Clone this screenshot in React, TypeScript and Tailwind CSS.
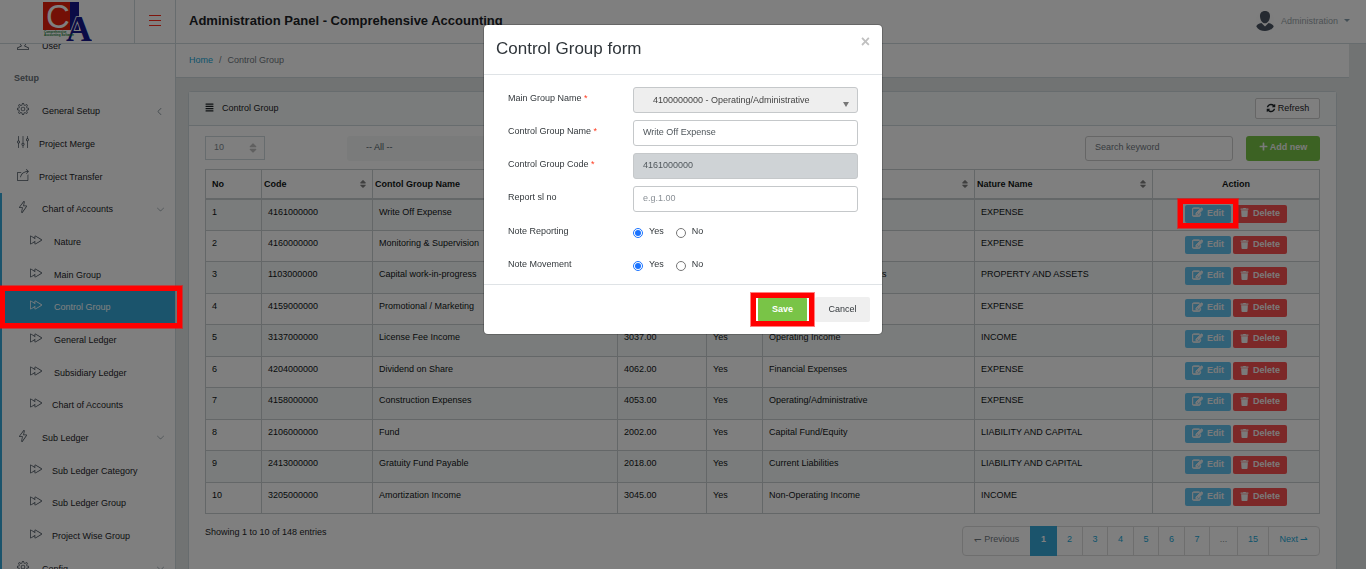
import React from "react";
import {
  SlUser,
  SlSettings,
  SlEqualizer,
  SlShareAlt,
  SlEnergy,
  SlControlForward,
  SlArrowDown,
  SlArrowLeft,
} from "react-icons/sl";
import { FaAlignJustify, FaPlus, FaSort, FaTrash } from "react-icons/fa";

type IconType = React.ComponentType<{ className?: string }>;

type NavItem = {
  label: string;
  icon?: IconType;
  level: "heading" | "top" | "tight" | "sub" | "subTight";
  chevron?: "left" | "down";
  grouped?: boolean;
  active?: boolean;
};

const navItems: NavItem[] = [
  { label: "User", icon: SlUser, level: "top" },
  { label: "Setup", level: "heading" },
  { label: "General Setup", icon: SlSettings, level: "top", chevron: "left" },
  { label: "Project Merge", icon: SlEqualizer, level: "tight" },
  { label: "Project Transfer", icon: SlShareAlt, level: "tight" },
  { label: "Chart of Accounts", icon: SlEnergy, level: "top", chevron: "down", grouped: true },
  { label: "Nature", icon: SlControlForward, level: "sub", grouped: true },
  { label: "Main Group", icon: SlControlForward, level: "sub", grouped: true },
  { label: "Control Group", icon: SlControlForward, level: "sub", grouped: true, active: true },
  { label: "General Ledger", icon: SlControlForward, level: "sub", grouped: true },
  { label: "Subsidiary Ledger", icon: SlControlForward, level: "sub", grouped: true },
  { label: "Chart of Accounts", icon: SlControlForward, level: "subTight", grouped: true },
  { label: "Sub Ledger", icon: SlEnergy, level: "top", chevron: "down", grouped: true },
  { label: "Sub Ledger Category", icon: SlControlForward, level: "subTight", grouped: true },
  { label: "Sub Ledger Group", icon: SlControlForward, level: "subTight", grouped: true },
  { label: "Project Wise Group", icon: SlControlForward, level: "subTight", grouped: true },
  { label: "Config", icon: SlSettings, level: "top", chevron: "down", grouped: true },
];

const levelClass = {
  heading: "pl-3",
  top: "pl-[15px] gap-[13px]",
  tight: "pl-[15px] gap-2.5",
  sub: "pl-7 gap-3",
  subTight: "pl-7 gap-2.5",
};

type Row = [string, string, string, string, string, string];

const rows: Row[] = [
  ["4161000000", "Write Off Expense", "4056.00", "Yes", "Operating/Administrative", "EXPENSE"],
  ["4160000000", "Monitoring & Supervision", "4055.00", "Yes", "Operating/Administrative", "EXPENSE"],
  ["1103000000", "Capital work-in-progress", "1003.00", "Yes", "Property, Plant & Equipments", "PROPERTY AND ASSETS"],
  ["4159000000", "Promotional / Marketing", "4054.00", "Yes", "Operating/Administrative", "EXPENSE"],
  ["3137000000", "License Fee Income", "3037.00", "Yes", "Operating Income", "INCOME"],
  ["4204000000", "Dividend on Share", "4062.00", "Yes", "Financial Expenses", "EXPENSE"],
  ["4158000000", "Construction Expenses", "4053.00", "Yes", "Operating/Administrative", "EXPENSE"],
  ["2106000000", "Fund", "2002.00", "Yes", "Capital Fund/Equity", "LIABILITY AND CAPITAL"],
  ["2413000000", "Gratuity Fund Payable", "2018.00", "Yes", "Current Liabilities", "LIABILITY AND CAPITAL"],
  ["3205000000", "Amortization Income", "3045.00", "Yes", "Non-Operating Income", "INCOME"],
];

const columns = ["Code", "Contol Group Name", "Sl no", "Note", "Main Group Name", "Nature Name"];

function Logo() {
  return (
    <svg viewBox="0 0 50 43" className="h-[43px] w-[50px]" role="img" aria-label="Comprehensive Accounting Software">
      <rect x="1" y="2" width="27" height="28" fill="#e8200c" />
      <rect x="28" y="2" width="9" height="28" fill="#16168c" />
      <text x="4" y="28" fontSize="33" fill="#fff" className="font-['Liberation_Sans',Arial,sans-serif]">C</text>
      <text x="24" y="41" fontSize="36" fontWeight="bold" fill="#16168c" stroke="#fff" strokeWidth="1.600" paintOrder="stroke" className="font-['Liberation_Serif',serif]">A</text>
      <text x="2" y="33" fontSize="3" fontWeight="bold" fill="#17803a" className="font-['Liberation_Sans',Arial,sans-serif]">Comprehensive</text>
      <text x="2" y="36" fontSize="3" fontWeight="bold" fill="#17803a" className="font-['Liberation_Sans',Arial,sans-serif]">Accounting Software</text>
    </svg>
  );
}

function RefreshIcon() {
  return (
    <svg viewBox="0 0 1792 1792" className="size-[10px]" fill="currentColor" aria-hidden="true">
      <path d="M1639 1056q0 5-1 7-64 268-268 434.500t-478 166.500q-146 0-282.500-55t-243.500-157l-129 129q-19 19-45 19t-45-19-19-45v-448q0-26 19-45t45-19h448q26 0 45 19t19 45-19 45l-137 137q71 66 161 102t187 36q134 0 250-65t186-179q11-17 53-117 8-23 30-23h192q13 0 22.500 9.500t9.500 22.500zm25-800v448q0 26-19 45t-45 19h-448q-26 0-45-19t-19-45 19-45l138-138q-148-137-349-137-134 0-250 65t-186 179q-11 17-53 117-8 23-30 23h-199q-13 0-22.500-9.500t-9.500-22.500v-7q65-268 270-434.500t480-166.500q146 0 284 55.500t245 156.500l130-129q19-19 45-19t45 19 19 45z" />
    </svg>
  );
}

function EditIcon() {
  return (
    <svg viewBox="0 0 1792 1792" className="size-[11px]" fill="currentColor" stroke="currentColor" strokeWidth="130" aria-hidden="true">
      <path d="M888 1184l116-116-152-152-116 116v56h96v96h56zm440-720q-16-16-33 1l-350 350q-17 17-1 33t33-1l350-350q17-17 1-33zm80 594v190q0 119-84.500 203.500t-203.500 84.500h-832q-119 0-203.500-84.500t-84.500-203.500v-832q0-119 84.500-203.500t203.500-84.500h832q63 0 117 25 15 7 18 23 3 17-9 29l-49 49q-14 14-32 8-23-6-45-6h-832q-66 0-113 47t-47 113v832q0 66 47 113t113 47h832q66 0 113-47t47-113v-126q0-13 9-22l64-64q15-15 35-7t20 29zm-96-738l288 288-672 672h-288v-288zm444 132l-92 92-288-288 92-92q28-28 68-28t68 28l152 152q28 28 28 68t-28 68z" />
    </svg>
  );
}

function Avatar() {
  return (
    <svg viewBox="0 0 20 22" className="h-[22px] w-5" aria-hidden="true">
      <circle cx="10" cy="11" r="9.500" fill="#fcfcfc" />
      <path d="M10 1c3.400 0 5.200 2.200 5 5.500-.2 3.600-2.200 6.800-5 6.800S5.200 10.100 5 6.500C4.800 3.200 6.600 1 10 1z" fill="#4b5563" />
      <path d="M6.500 13l3.500 3.600L13.500 13c2.800.6 4.800 1.600 5.200 3.400C17 19.600 13.800 21 10 21s-7-1.400-8.700-4.600C1.700 14.600 3.700 13.600 6.500 13z" fill="#4b5563" />
    </svg>
  );
}

function Highlight({ className }: { className: string }) {
  return (
    <span
      aria-hidden="true"
      className={"pointer-events-none absolute z-50 border-[5px] border-[#f00] ring-1 ring-[#f00]/50 " + className}
    />
  );
}

function Sidebar() {
  return (
    <nav className="-mt-[15px] w-[176px] shrink-0 border-r border-[#cfd8dc] bg-white">
      <ul>
        {navItems.map((item, i) => {
          const Icon = item.icon;
          return (
            <li
              key={i}
              className={
                "relative h-[33px] nth-[3n]:h-8 " +
                (item.grouped ? "border-l-2 border-[#36a9d8]" : "border-l-2 border-transparent")
              }
            >
              {item.level === "heading" ? (
                <div className="flex h-full items-center pb-0.5 pl-3 font-bold text-[#6b747b]">{item.label}</div>
              ) : (
                <a
                  href="#"
                  className={
                    "flex h-full items-center " +
                    levelClass[item.level] +
                    (item.active ? " bg-[#36a9d8] text-white" : " text-[#1c2327]")
                  }
                >
                  {Icon && (
                    <Icon
                      className={"mb-1 size-3 shrink-0 " + (item.active ? "text-white" : "text-[#4a5560]")}
                    />
                  )}
                  <span>{item.label}</span>
                  {item.chevron === "left" && <SlArrowLeft className="mr-3 ml-auto size-[7px] text-[#70808a]" />}
                  {item.chevron === "down" && <SlArrowDown className="mr-[11px] ml-auto size-[7px] text-[#70808a]" />}
                </a>
              )}
              {item.active && <Highlight className="-top-[5px] -right-[7px] -bottom-[5px] -left-0.5" />}
            </li>
          );
        })}
      </ul>
    </nav>
  );
}

function DataTable() {
  return (
    <table className="mt-2 w-full table-fixed border-collapse border border-[#c8ced1] text-[#101416]">
      <colgroup>
        <col className="w-[56px]" />
        <col className="w-[111px]" />
        <col />
        <col className="w-[89px]" />
        <col className="w-[56px]" />
        <col className="w-[212px]" />
        <col className="w-[178px]" />
        <col className="w-[167px]" />
      </colgroup>
      <thead>
        <tr className="h-[29px] border-b-2 border-[#c8ced1]">
          <th className="border-r border-[#c8ced1] pl-1.5 text-left">No</th>
          {columns.map((c) => (
            <th key={c} className="border-r border-[#c8ced1] pr-1 pl-0.5 text-left">
              <span className="flex items-center justify-between overflow-hidden">
                {c}
                <FaSort className="size-[10px] shrink-0 text-[#808080]" />
              </span>
            </th>
          ))}
          <th>Action</th>
        </tr>
      </thead>
      <tbody>
        {rows.map((r, i) => (
          <tr key={r[0]} className="h-8 border-b border-[#c8ced1] align-top odd:bg-[#f5f9f8] even:h-[31px]">
            <td className="border-r border-[#c8ced1] pt-1.5 pl-1.5">{i + 1}</td>
            {r.map((cell, j) => (
              <td key={j} className="overflow-hidden border-r border-[#c8ced1] pt-1.5 pl-1.5 whitespace-nowrap">
                {cell}
              </td>
            ))}
            <td className="pt-[5px]">
              <div className="flex justify-center gap-0.5 font-bold text-[#f4f4f4]">
                <span className="relative">
                  <button type="button" className="flex h-[18px] w-[46px] items-center justify-center gap-1 rounded-xs bg-[#63c2ee] pb-0.5">
                    <EditIcon /> Edit
                  </button>
                  {i === 0 && <Highlight className="-inset-x-[7px] -top-1.5 -bottom-[5px]" />}
                </span>
                <button type="button" className="flex h-[18px] w-[54px] items-center justify-center gap-1 rounded-xs bg-[#f85050] pb-0.5">
                  <FaTrash className="size-[9px]" /> Delete
                </button>
              </div>
            </td>
          </tr>
        ))}
      </tbody>
    </table>
  );
}

function Pagination() {
  const cell = "flex items-center justify-center border-r border-[#dddddd] pb-1 ";
  return (
    <nav aria-label="Pages" className="mt-3 flex h-[30px] rounded-sm border border-[#dddddd] text-[#20a8d8]">
      <a href="#" className="flex w-[67px] items-center justify-center pb-1 text-[#70787e]">↽ Previous</a>
      <a href="#" className="-my-px flex w-[27px] items-center justify-center bg-[#36a9d8] pb-1 font-bold text-white">1</a>
      {["2", "3", "4", "5", "6", "7"].map((p) => (
        <a key={p} href="#" className={cell + "w-[25px] odd:w-[26px]"}>{p}</a>
      ))}
      <span className={cell + "w-7 text-[#818a91]"}>...</span>
      <a href="#" className={cell + "w-[31px]"}>15</a>
      <a href="#" className="flex w-[50px] items-center justify-center pb-1">Next ⇀</a>
    </nav>
  );
}

function TextField(props: { id: string; label: string; required?: boolean; children: React.ReactNode }) {
  return (
    <div className="flex h-[26px] items-start">
      <label htmlFor={props.id} className="w-[125px] shrink-0 pt-[5px]">
        {props.label} {props.required && <span className="text-[#ff3b20]">*</span>}
      </label>
      {props.children}
    </div>
  );
}

function RadioField({ name, label }: { name: string; label: string }) {
  return (
    <div role="radiogroup" aria-label={label} className="flex h-[26px] items-start pt-1.5">
      <span className="w-[125px] shrink-0">{label}</span>
      {["Yes", "No"].map((option) => (
        <label key={option} className="mr-3 flex gap-1.5">
          <input
            type="radio"
            name={name}
            defaultChecked={option === "Yes"}
            className="mt-[3px] size-[10px] accent-[#1a73ff]"
          />
          {option}
        </label>
      ))}
    </div>
  );
}

function FormDialog() {
  const field = "h-full flex-1 rounded-[3px] border border-[#c5c8ca] px-[9px] pb-0.5 text-[#50575c] placeholder:text-[#8a9096] ";
  return (
    <div className="fixed inset-0 z-40 flex items-start justify-center bg-black/50 pt-[25px]">
      <form
        role="dialog"
        aria-labelledby="dialog-title"
        className="w-[398px] rounded-[4px] bg-white text-[#33383c] shadow-[0_0_0_1px_rgba(0,0,0,0.2)]"
      >
        <header className="flex h-[50px] items-start justify-between border-b border-[#dfe3e6] px-3 pt-3">
          <h2 id="dialog-title" className="text-[17px] leading-6 text-[#2f353a]">Control Group form</h2>
          <button type="button" aria-label="Close" className="text-base leading-[10px] font-bold text-[#c0c0c0]">×</button>
        </header>
        <div className="flex flex-col gap-[7px] px-6 pt-3 pb-[6px]">
          <TextField id="main-group" label="Main Group Name" required>
            <div className="relative h-full flex-1">
              <select id="main-group" className="size-full appearance-none rounded-[3px] border border-[#c5c8ca] bg-[#eeeeee] pl-[19px] text-[#444444]">
                <option>4100000000 - Operating/Administrative</option>
              </select>
              <span aria-hidden="true" className="pointer-events-none absolute right-[9px] bottom-1.5 border-x-[3px] border-t-[5px] border-x-transparent border-t-[#777777]" />
            </div>
          </TextField>
          <TextField id="group-name" label="Control Group Name" required>
            <input id="group-name" defaultValue="Write Off Expense" className={field + "bg-white"} />
          </TextField>
          <TextField id="group-code" label="Control Group Code" required>
            <input id="group-code" defaultValue="4161000000" readOnly className={field + "bg-[#cfd3d6]"} />
          </TextField>
          <TextField id="report-sl" label="Report sl no">
            <input id="report-sl" placeholder="e.g.1.00" className={field + "bg-white"} />
          </TextField>
          <RadioField name="reporting" label="Note Reporting" />
          <RadioField name="movement" label="Note Movement" />
        </div>
        <footer className="flex h-[50px] items-center justify-end gap-2 border-t border-[#dfe3e6] px-3">
          <span className="relative">
            <button type="button" className="h-[25px] w-[49px] rounded-xs bg-[#79c447] pb-0.5 font-bold text-white">Save</button>
            <Highlight className="-inset-x-[7px] -top-1 -bottom-1" />
          </span>
          <button type="button" className="h-[25px] w-[55px] rounded-xs bg-[#efefef] pb-0.5">Cancel</button>
        </footer>
      </form>
    </div>
  );
}

export default function App() {
  return (
    <div className="flex h-screen flex-col overflow-hidden bg-[#e3e7e6] font-['Liberation_Sans',Arial,sans-serif] text-[9px] leading-3 text-[#1c2327]">
      <header className="relative z-10 flex h-11 shrink-0 items-stretch border-b border-[#cfd8dc] bg-white">
        <div className="flex w-[134px] items-start justify-center">
          <Logo />
        </div>
        <button type="button" aria-label="Toggle menu" className="flex w-[42px] flex-col items-center justify-center gap-1 border-x border-[#cfd8dc] pb-0.5">
          <span className="h-px w-3 bg-[#ff2a1a]" />
          <span className="h-px w-3 bg-[#ff2a1a]" />
          <span className="h-px w-3 bg-[#ff2a1a]" />
        </button>
        <h1 className="self-center pb-0.5 pl-[13px] text-[13px] leading-4 font-bold text-[#1c2327]">
          Administration Panel - Comprehensive Accounting
        </h1>
        <button type="button" className="mr-4 ml-auto flex items-center gap-1.5 pb-0.5 text-[#9aa4aa]">
          <Avatar />
          Administration
          <span className="border-x-[3px] border-t-[3px] border-x-transparent border-t-[#869fac]" />
        </button>
      </header>

      <div className="flex min-h-0 flex-1">
        <Sidebar />
        <main className="min-w-0 flex-1 pr-[17px]">
          <nav aria-label="Breadcrumb" className="flex h-[34px] items-center gap-1.5 border-b border-[#cfd8dc] bg-white pb-0.5 pl-[13px] text-[#70787e]">
            <a href="#" className="text-[#20a8d8]">Home</a>
            <span>/</span>
            <span>Control Group</span>
          </nav>
          <section className="mt-[13px] mr-3 ml-3 h-screen rounded-[3px] border border-[#cfd8dc] bg-white">
            <header className="flex h-[34px] items-center justify-between border-b border-[#cfd8dc] bg-[#f5f9f8] px-4">
              <h2 className="flex items-center gap-2 pb-0.5">
                <FaAlignJustify className="size-[9px]" /> Control Group
              </h2>
              <button type="button" className="flex h-[21px] w-[65px] items-center justify-center gap-0.5 rounded-xs border border-[#cccccc] bg-white pb-0.5">
                <RefreshIcon /> Refresh
              </button>
            </header>
            <div className="px-4 pt-[10px]">
              <div className="flex h-[25px] items-start">
                <div className="relative h-6 w-[60px]">
                  <select aria-label="Rows per page" className="size-full appearance-none border border-[#cfd8dc] bg-white pb-0.5 pl-2 text-[#818a91]">
                    <option>10</option>
                  </select>
                  <FaSort className="pointer-events-none absolute top-1.5 right-1.5 size-3 text-[#c0c0c0]" />
                </div>
                <select aria-label="Main group filter" className="ml-[82px] h-[25px] w-[226px] appearance-none rounded-[3px] bg-[#f4f7f6] pb-1 pl-[19px] text-[#505c66]">
                  <option>-- All --</option>
                </select>
                <input aria-label="Search" placeholder="Search keyword" className="mr-[13px] ml-auto h-[25px] w-[148px] rounded-[3px] border border-[#cccccc] px-[9px] pb-1 placeholder:text-[#70787e]" />
                <button type="button" className="flex h-[25px] w-[74px] items-center justify-center gap-0.5 rounded-[3px] bg-[#79c447] pb-1 font-bold text-[#f4f4f4]">
                  <FaPlus className="size-[9px]" /> Add new
                </button>
              </div>
              <DataTable />
              <div className="flex items-start justify-between">
                <p className="pt-3">Showing 1 to 10 of 148 entries</p>
                <Pagination />
              </div>
            </div>
          </section>
        </main>
      </div>
      <FormDialog />
    </div>
  );
}
